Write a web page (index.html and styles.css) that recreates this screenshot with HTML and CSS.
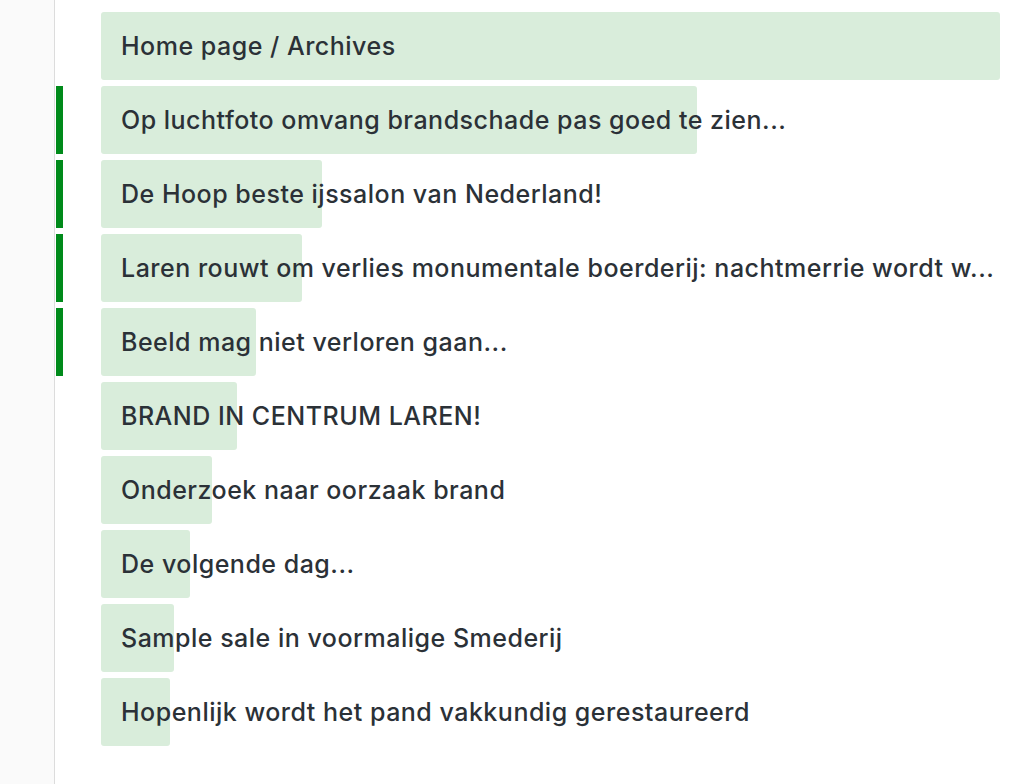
FILE: index.html
```html
<!DOCTYPE html>
<html>
<head>
<meta charset="utf-8">
<link rel="stylesheet" href="styles.css">
</head>
<body>
<div class="page">
  <aside class="sidebar"></aside>
  <main class="list">
    <div class="item">
      <span class="marker"></span>
      <div class="row"><div class="fill" style="width:100%"></div><span class="label">Home page / Archives</span></div>
    </div>
    <div class="item">
      <span class="marker on"></span>
      <div class="row"><div class="fill" style="width:596px"></div><span class="label">Op luchtfoto omvang brandschade pas goed te zien...</span></div>
    </div>
    <div class="item">
      <span class="marker on"></span>
      <div class="row"><div class="fill" style="width:221px"></div><span class="label">De Hoop beste ijssalon van Nederland!</span></div>
    </div>
    <div class="item">
      <span class="marker on"></span>
      <div class="row"><div class="fill" style="width:201px"></div><span class="label">Laren rouwt om verlies monumentale boerderij: nachtmerrie wordt w...</span></div>
    </div>
    <div class="item">
      <span class="marker on"></span>
      <div class="row"><div class="fill" style="width:155px"></div><span class="label">Beeld mag niet verloren gaan...</span></div>
    </div>
    <div class="item">
      <span class="marker"></span>
      <div class="row"><div class="fill" style="width:136px"></div><span class="label">BRAND IN CENTRUM LAREN!</span></div>
    </div>
    <div class="item">
      <span class="marker"></span>
      <div class="row"><div class="fill" style="width:111px"></div><span class="label">Onderzoek naar oorzaak brand</span></div>
    </div>
    <div class="item">
      <span class="marker"></span>
      <div class="row"><div class="fill" style="width:89px"></div><span class="label">De volgende dag...</span></div>
    </div>
    <div class="item">
      <span class="marker"></span>
      <div class="row"><div class="fill" style="width:73px"></div><span class="label">Sample sale in voormalige Smederij</span></div>
    </div>
    <div class="item">
      <span class="marker"></span>
      <div class="row"><div class="fill" style="width:69px"></div><span class="label">Hopenlijk wordt het pand vakkundig gerestaureerd</span></div>
    </div>
  </main>
</div>
</body>
</html>
```

FILE: styles.css
```css
html, body {
  margin: 0;
  padding: 0;
  background: #ffffff;
}
body {
  font-family: Inter, "Noto Sans", sans-serif;
  color: #2b3137;
}
.page {
  display: flex;
  min-height: 784px;
}
.sidebar {
  width: 54px;
  flex: none;
  background: #fafafa;
  border-right: 1px solid #dcdcdc;
}
.list {
  flex: 1;
  display: flex;
  flex-direction: column;
  gap: 6px;
  padding: 12px 24px 0 1px;
  min-width: 0;
}
.item {
  display: flex;
  gap: 38px;
  height: 68px;
}
.marker {
  width: 7px;
  flex: none;
}
.marker.on {
  background: #008a1a;
}
.row {
  position: relative;
  flex: 1;
  min-width: 0;
  display: flex;
  align-items: center;
  padding: 0 0 0 20px;
}
.fill {
  position: absolute;
  left: 0;
  top: 0;
  bottom: 0;
  background: #d9eddb;
  border-radius: 3px;
}
.label {
  position: relative;
  font-size: 25px;
  font-weight: 500;
  letter-spacing: 0.5px;
  white-space: nowrap;
  min-width: 0;
}
```
